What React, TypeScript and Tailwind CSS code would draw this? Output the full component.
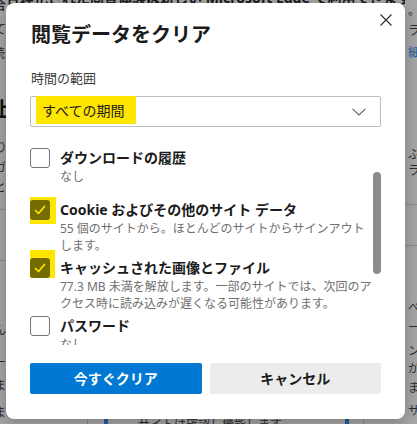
import React from "react";

const font = "font-['Noto_Sans','Noto_Sans_CJK_JP',sans-serif]";

function CheckBox({
  checked,
  mark,
}: {
  checked?: boolean;
  mark?: "a" | "b";
}) {
  return (
    <div className="relative h-[20px] w-[20px] shrink-0">
      {/* yellow annotation marks from the screenshot */}
      {mark === "a" && (
        <div className="absolute left-[-4px] top-[-3px] h-[27px] w-[30px] bg-[#ffe600]" />
      )}
      {mark === "b" && (
        <div className="absolute left-[-9px] top-[-8px] h-[28px] w-[34px] bg-[#ffe600]" />
      )}
      {checked ? (
        <div className="relative flex h-[20px] w-[20px] items-center justify-center rounded-[3px] bg-[#736c00]">
          <svg width="14" height="14" viewBox="0 0 14 14" fill="none">
            <polyline
              points="2.5,7.5 5.5,10.5 11.5,3.5"
              stroke="#ffe600"
              strokeWidth="1.7"
              strokeLinecap="round"
              strokeLinejoin="round"
            />
          </svg>
        </div>
      ) : (
        <div className="relative h-[20px] w-[20px] rounded-[3px] border border-[#757575] bg-white" />
      )}
    </div>
  );
}

function Item({
  title,
  sub,
  checked,
  mark,
}: {
  title: string;
  sub: string;
  checked?: boolean;
  mark?: "a" | "b";
}) {
  return (
    <div className="flex min-h-[52px] shrink-0 gap-[10px] pb-[4px]">
      <CheckBox checked={checked} mark={mark} />
      <div className="min-w-0 flex-1">
        <div className="text-[14px] font-bold leading-[20px] text-[#1b1b1b]">{title}</div>
        <div className="text-[12px] leading-[17px] text-[#707070]">{sub}</div>
      </div>
    </div>
  );
}

function Dialog() {
  return (
    <div className="absolute left-[6px] top-[3px] flex h-[416px] w-[399px] flex-col rounded-[8px] bg-white px-[24px] pb-[25px] pt-[18px] shadow-[0_4px_16px_rgba(0,0,0,0.25)]">
      <button className="absolute right-[13px] top-[11px] flex h-[12px] w-[12px] items-center justify-center">
        <svg width="12" height="12" viewBox="0 0 12 12" fill="none">
          <path d="M0.5 0.5 L11.5 11.5 M11.5 0.5 L0.5 11.5" stroke="#2b2b2b" strokeWidth="1.1" />
        </svg>
      </button>

      <h1 className="pl-px text-[20px] font-bold leading-[28px] text-[#1b1b1b]">閲覧データをクリア</h1>

      <div className="mt-[20px] pl-px text-[13px] leading-[18px] text-[#3a3a3a]">時間の範囲</div>

      <div className="mt-[9px] flex h-[31px] items-start rounded-[2px] border border-[#bdbdbd] pl-[5px] pr-[14px]">
        <span className="-mt-px flex h-[28px] w-[100px] items-center bg-[#ffe600] px-[6px] text-[14px] text-[#1b1b1b]">
          すべての期間
        </span>
        <svg className="ml-auto self-center" width="14" height="8" viewBox="0 0 14 8" fill="none">
          <polyline points="0.5,0.8 7,7 13.5,0.8" stroke="#606060" strokeWidth="1.1" />
        </svg>
      </div>

      <div className="mt-[11px] flex h-[207px]">
        <div className="flex min-w-0 flex-1 flex-col overflow-hidden pt-[10px]">
          <Item title="ダウンロードの履歴" sub="なし" />
          <Item
            title="Cookie およびその他のサイト データ"
            sub="55 個のサイトから。ほとんどのサイトからサインアウトします。"
            checked
            mark="a"
          />
          <Item
            title="キャッシュされた画像とファイル"
            sub="77.3 MB 未満を解放します。一部のサイトでは、次回のアクセス時に読み込みが遅くなる可能性があります。"
            checked
            mark="b"
          />
          <Item title="パスワード" sub="なし" />
        </div>
        <div className="w-[8px] shrink-0 pt-[34px]">
          <div className="h-[102px] rounded-full bg-[#8c8c8c]" />
        </div>
      </div>

      <div className="mt-auto flex gap-[8px]">
        <button className="flex h-[31px] flex-1 items-center justify-center rounded-[2px] bg-[#0078d4] text-[14px] font-bold text-white">
          今すぐクリア
        </button>
        <button className="flex h-[31px] flex-1 items-center justify-center rounded-[2px] bg-[#ececec] text-[14px] font-bold text-[#1b1b1b]">
          キャンセル
        </button>
      </div>
    </div>
  );
}

export default function App() {
  return (
    <div className={`relative h-[424px] w-[417px] overflow-hidden bg-[#a6a6a6] ${font}`}>
      {/* dimmed page behind the dialog */}
      <div className="flex h-full text-[#2e2e2e]">
        <div className="flex w-[6px] shrink-0 flex-col overflow-hidden whitespace-nowrap text-[12px] leading-[12px]">
          <div className="-ml-[6px] font-bold">合</div>
          <div className="-ml-[6px] mt-[12px]">て</div>
          <div className="-ml-[7px] mt-[12px]">読</div>
          <div className="-ml-[9px] mt-[40px] text-[20px] font-bold leading-[20px] text-[#111]">止</div>
          <div className="-ml-[5px] mt-[22px]">り</div>
          <div className="-ml-[6px] mt-[8px]">ガ</div>
          <div className="-ml-[6px] mt-[8px]">と</div>
          <div className="mt-[15px] h-px bg-[#8a8a8a]" />
          <div className="mt-[50px] h-px bg-[#8a8a8a]" />
          <div className="-ml-[6px] mt-[64px]">ん</div>
          <div className="-ml-[6px] mt-[20px]">ー</div>
          <div className="-ml-[6px] mt-[11px]">ま</div>
          <div className="-ml-[6px] mt-[15px]">ま</div>
        </div>

        <div className="flex flex-1 flex-col justify-between overflow-hidden">
          <div className="-mt-[9px] whitespace-nowrap text-[14px] font-bold leading-[14px] text-[#1a1a1a]">
            合理化された閲覧体験は新しい Microsoft Edge で利用できます
          </div>
          <div className="flex h-[5px] items-stretch">
            <div className="ml-[81px] w-px bg-[#8a8a8a]" />
            <div className="ml-[16px] w-[4px] bg-[#1f5f9e]" />
            <div className="ml-[30px] whitespace-nowrap text-[12px] leading-[12px]">サイトは確認し機能します</div>
            <div className="ml-auto w-[4px] bg-[#1f5f9e]" />
            <div className="ml-[14px] mr-[41px] w-px bg-[#8a8a8a]" />
          </div>
        </div>

        <div className="flex w-[12px] shrink-0 flex-col overflow-hidden whitespace-nowrap pl-[3px] text-[12px] leading-[12px]">
          <div className="mt-[5px]">。</div>
          <div className="mt-[8px]">ラ</div>
          <div className="mt-[10px] text-[#1f5f9e]">細</div>
          <div className="mt-[90px]">ぶ</div>
          <div className="mt-[4px]">ラ</div>
          <div className="-ml-[3px] mt-[27px] h-px bg-[#8a8a8a]" />
          <div className="-ml-[3px] mt-[40px] h-px bg-[#8a8a8a]" />
          <div className="mt-[56px]">べ</div>
          <div className="mt-[8px]">ー</div>
          <div className="mt-[11px]">ン</div>
          <div className="mt-[6px]">が</div>
          <div className="mt-[7px]">ま</div>
          <div className="mt-[11px]">サ</div>
        </div>
      </div>

      <Dialog />
    </div>
  );
}
